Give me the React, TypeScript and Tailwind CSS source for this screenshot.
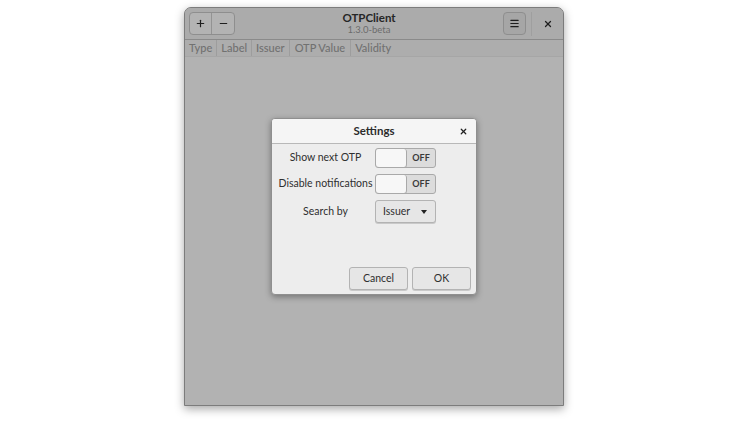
import { Plus, Minus, X, Menu } from "lucide-react";

const font = { fontFamily: 'Lato, "Noto Sans", sans-serif' };

const Switch = () => (
  <div className="flex h-[20px] w-[61px] overflow-hidden rounded-[3px] border border-[#a9a9a9] bg-[#dcdcdc]">
    <div className="w-[31px] rounded-[3px] border-r border-[#a9a9a9] bg-[#f7f7f7] shadow-[0_1px_0_#bdbdbd]" />
    <div className="flex flex-1 items-center justify-center text-[9px] font-bold text-[#3a3a3a]">OFF</div>
  </div>
);

export default function App() {
  return (
    <div className="relative h-[423px] w-[752px] overflow-hidden bg-white" style={font}>
      <div className="ml-[184px] pt-[7px]">
        <div className="flex h-[399px] w-[380px] flex-col overflow-hidden rounded-t-[7px] border border-[#7c7c7c] bg-[#b2b2b2] shadow-[0_3px_10px_rgba(0,0,0,0.35)]">
          {/* header bar */}
          <div className="flex h-[32px] items-center border-b border-[#8a8a8a] bg-[#ababab] pl-[4px]">
            <div className="flex h-[23px] overflow-hidden rounded-[4px] border border-[#8e8e8e] bg-[#b3b3b3]">
              <div className="flex w-[22px] items-center justify-center border-r border-[#939393] text-[#1f1f1f]">
                <Plus size={11} strokeWidth={2.6} />
              </div>
              <div className="flex w-[22px] items-center justify-center text-[#1f1f1f]">
                <Minus size={11} strokeWidth={2.6} />
              </div>
            </div>
            <div className="flex flex-1 flex-col items-center">
              <div className="text-[11.5px] font-bold leading-[13px] text-[#262626]">OTPClient</div>
              <div className="text-[9.5px] leading-[12px] text-[#6c6c6c]">1.3.0-beta</div>
            </div>
            <div className="flex h-[23px] w-[23px] items-center justify-center rounded-[4px] border border-[#8e8e8e] bg-[#a6a6a6] text-[#1f1f1f]">
              <Menu size={11} strokeWidth={2.6} />
            </div>
            <div className="ml-[5px] h-[24px] w-px bg-[#9f9f9f]" />
            <div className="flex w-[31px] items-center justify-center text-[#1f1f1f]">
              <X size={10} strokeWidth={3} />
            </div>
          </div>
          {/* column header */}
          <div className="flex h-[17px] items-center border-b border-[#a6a6a6] bg-[#adadad] text-[11px] font-medium text-[#717171]">
            <div className="border-r border-[#9d9d9d] px-[4px]">Type</div>
            <div className="border-r border-[#9d9d9d] px-[4px]">Label</div>
            <div className="border-r border-[#9d9d9d] px-[4px]">Issuer</div>
            <div className="border-r border-[#9d9d9d] px-[5px]">OTP Value</div>
            <div className="px-[4px]">Validity</div>
          </div>
          <div className="flex-1" />
        </div>
      </div>

      {/* settings dialog */}
      <div className="absolute left-[271px] top-[118px] flex h-[177px] w-[206px] flex-col overflow-hidden rounded-[4px] border border-[#8f8f8f] bg-[#ededed] shadow-[0_2px_6px_rgba(0,0,0,0.35)]">
        <div className="relative flex h-[25px] items-center justify-center border-b border-[#b8b8b8] bg-[#f5f5f5]">
          <span className="text-[11.5px] font-bold text-[#2b2b2b]">Settings</span>
          <X size={9} strokeWidth={3.2} className="absolute right-[8px] text-[#222]" />
        </div>
        <div className="flex flex-col gap-[6px] px-[4px] pt-[4px] text-[10.5px] text-[#2f2f2f]">
          <div className="flex items-center">
            <div className="w-[99px] whitespace-nowrap text-center">Show next OTP</div>
            <Switch />
          </div>
          <div className="flex items-center">
            <div className="w-[99px] whitespace-nowrap text-center">Disable notifications</div>
            <Switch />
          </div>
          <div className="flex items-center">
            <div className="w-[99px] whitespace-nowrap text-center">Search by</div>
            <div className="flex h-[23px] w-[61px] items-center justify-between rounded-[3px] border border-[#b3b3b3] bg-[#e6e6e6] pl-[7px] pr-[8px] shadow-[0_1px_0_#c9c9c9]">
              <span>Issuer</span>
              <span className="h-0 w-0 border-x-[3.5px] border-t-[4px] border-x-transparent border-t-[#222]" />
            </div>
          </div>
        </div>
        <div className="flex-1" />
        <div className="flex justify-end gap-[4px] px-[5px] pb-[4px] text-[10.5px] text-[#2f2f2f]">
          <div className="flex h-[23px] w-[59px] items-center justify-center rounded-[3px] border border-[#b3b3b3] bg-[#e6e6e6] shadow-[0_1px_0_#c9c9c9]">Cancel</div>
          <div className="flex h-[23px] w-[59px] items-center justify-center rounded-[3px] border border-[#b3b3b3] bg-[#e6e6e6] shadow-[0_1px_0_#c9c9c9]">OK</div>
        </div>
      </div>
    </div>
  );
}
